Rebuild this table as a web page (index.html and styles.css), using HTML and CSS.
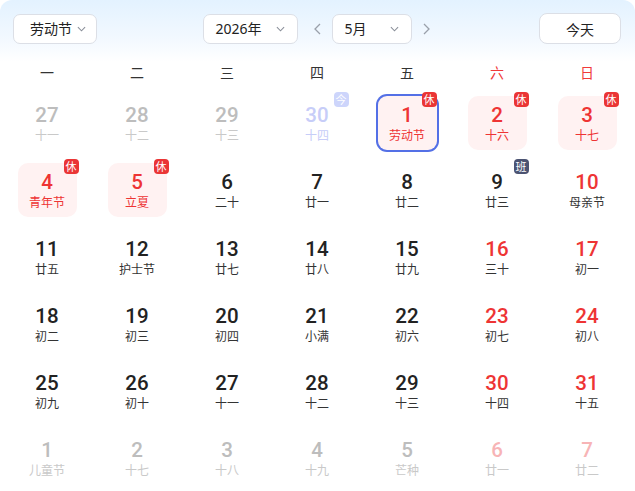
FILE: index.html
```html
<!DOCTYPE html>
<html lang="zh">
<head>
<meta charset="utf-8">
<link rel="stylesheet" href="styles.css">
</head>
<body>
<div class="cal">
  <header class="top">
    <div class="pick pick-hol"><span>劳动节</span><svg class="chev" viewBox="0 0 10 6"><path d="M1 1l4 4 4-4"/></svg></div>
    <div class="center">
      <div class="pick pick-year"><span>2026年</span><svg class="chev" viewBox="0 0 10 6"><path d="M1 1l4 4 4-4"/></svg></div>
      <svg class="arrow arrow-prev" viewBox="0 0 7 12"><path d="M6 1L1 6l5 5"/></svg>
      <div class="pick pick-month"><span>5月</span><svg class="chev" viewBox="0 0 10 6"><path d="M1 1l4 4 4-4"/></svg></div>
      <svg class="arrow arrow-next" viewBox="0 0 7 12"><path d="M1 1l5 5-5 5"/></svg>
    </div>
    <button class="today-btn">今天</button>
  </header>

  <div class="weekdays">
    <div>一</div><div>二</div><div>三</div><div>四</div><div>五</div><div class="red">六</div><div class="red">日</div>
  </div>

  <div class="grid">
    <div class="cell"><div class="box other"><span class="num">27</span><span class="lunar">十一</span></div></div>
    <div class="cell"><div class="box other"><span class="num">28</span><span class="lunar">十二</span></div></div>
    <div class="cell"><div class="box other"><span class="num">29</span><span class="lunar">十三</span></div></div>
    <div class="cell"><div class="box today"><span class="num">30</span><span class="lunar">十四</span><i class="badge badge-today">今</i></div></div>
    <div class="cell"><div class="box hol sel"><span class="num">1</span><span class="lunar">劳动节</span><i class="badge">休</i></div></div>
    <div class="cell"><div class="box hol"><span class="num">2</span><span class="lunar">十六</span><i class="badge">休</i></div></div>
    <div class="cell"><div class="box hol"><span class="num">3</span><span class="lunar">十七</span><i class="badge">休</i></div></div>

    <div class="cell"><div class="box hol"><span class="num">4</span><span class="lunar">青年节</span><i class="badge">休</i></div></div>
    <div class="cell"><div class="box hol"><span class="num">5</span><span class="lunar">立夏</span><i class="badge">休</i></div></div>
    <div class="cell"><div class="box"><span class="num">6</span><span class="lunar">二十</span></div></div>
    <div class="cell"><div class="box"><span class="num">7</span><span class="lunar">廿一</span></div></div>
    <div class="cell"><div class="box"><span class="num">8</span><span class="lunar">廿二</span></div></div>
    <div class="cell"><div class="box"><span class="num">9</span><span class="lunar">廿三</span><i class="badge badge-work">班</i></div></div>
    <div class="cell"><div class="box we"><span class="num">10</span><span class="lunar">母亲节</span></div></div>

    <div class="cell"><div class="box"><span class="num">11</span><span class="lunar">廿五</span></div></div>
    <div class="cell"><div class="box"><span class="num">12</span><span class="lunar">护士节</span></div></div>
    <div class="cell"><div class="box"><span class="num">13</span><span class="lunar">廿七</span></div></div>
    <div class="cell"><div class="box"><span class="num">14</span><span class="lunar">廿八</span></div></div>
    <div class="cell"><div class="box"><span class="num">15</span><span class="lunar">廿九</span></div></div>
    <div class="cell"><div class="box we"><span class="num">16</span><span class="lunar">三十</span></div></div>
    <div class="cell"><div class="box we"><span class="num">17</span><span class="lunar">初一</span></div></div>

    <div class="cell"><div class="box"><span class="num">18</span><span class="lunar">初二</span></div></div>
    <div class="cell"><div class="box"><span class="num">19</span><span class="lunar">初三</span></div></div>
    <div class="cell"><div class="box"><span class="num">20</span><span class="lunar">初四</span></div></div>
    <div class="cell"><div class="box"><span class="num">21</span><span class="lunar">小满</span></div></div>
    <div class="cell"><div class="box"><span class="num">22</span><span class="lunar">初六</span></div></div>
    <div class="cell"><div class="box we"><span class="num">23</span><span class="lunar">初七</span></div></div>
    <div class="cell"><div class="box we"><span class="num">24</span><span class="lunar">初八</span></div></div>

    <div class="cell"><div class="box"><span class="num">25</span><span class="lunar">初九</span></div></div>
    <div class="cell"><div class="box"><span class="num">26</span><span class="lunar">初十</span></div></div>
    <div class="cell"><div class="box"><span class="num">27</span><span class="lunar">十一</span></div></div>
    <div class="cell"><div class="box"><span class="num">28</span><span class="lunar">十二</span></div></div>
    <div class="cell"><div class="box"><span class="num">29</span><span class="lunar">十三</span></div></div>
    <div class="cell"><div class="box we"><span class="num">30</span><span class="lunar">十四</span></div></div>
    <div class="cell"><div class="box we"><span class="num">31</span><span class="lunar">十五</span></div></div>

    <div class="cell"><div class="box other"><span class="num">1</span><span class="lunar">儿童节</span></div></div>
    <div class="cell"><div class="box other"><span class="num">2</span><span class="lunar">十七</span></div></div>
    <div class="cell"><div class="box other"><span class="num">3</span><span class="lunar">十八</span></div></div>
    <div class="cell"><div class="box other"><span class="num">4</span><span class="lunar">十九</span></div></div>
    <div class="cell"><div class="box other"><span class="num">5</span><span class="lunar">芒种</span></div></div>
    <div class="cell"><div class="box other other-we"><span class="num">6</span><span class="lunar">廿一</span></div></div>
    <div class="cell"><div class="box other other-we"><span class="num">7</span><span class="lunar">廿二</span></div></div>
  </div>
</div>
</body>
</html>
```

FILE: styles.css
```css
* { box-sizing: border-box; }
html, body {
  margin: 0;
  padding: 0;
  background: #fff;
  overflow: hidden;
}
body {
  font-family: "Noto Sans", "Noto Sans CJK SC", sans-serif;
  color: #222;
}
.cal {
  width: 635px;
  height: 491px;
  border-radius: 12px 12px 0 0;
  background: linear-gradient(to bottom, #e3f2ff 0px, #f3f9ff 40px, #ffffff 62px);
  overflow: hidden;
}
.top {
  height: 58px;
  padding: 0 14px 0 13px;
  display: flex;
  align-items: center;
  justify-content: space-between;
}
.center {
  display: flex;
  align-items: center;
  margin-left: -4px;
}
.pick {
  height: 30px;
  background: #fff;
  border: 1px solid #dcdfe6;
  border-radius: 7px;
  display: flex;
  align-items: center;
  justify-content: space-between;
  font-size: 14px;
  color: #222;
  font-family: "Noto Sans", "Noto Sans CJK SC", sans-serif;
}
.pick span { line-height: 1; }
.pick-hol { width: 84px; padding: 0 10px 0 16px; }
.pick-year { width: 95px; padding: 0 12px 0 12px; }
.pick-month { width: 80px; padding: 0 12px 0 12px; }
.chev {
  width: 9px;
  height: 6px;
  fill: none;
  stroke: #8a8f99;
  stroke-width: 1.2;
}
.arrow {
  width: 7px;
  height: 12px;
  fill: none;
  stroke: #9aa0aa;
  stroke-width: 1.3;
}
.arrow-prev { margin: 0 11px 0 16px; }
.arrow-next { margin: 0 0 0 11px; }
.today-btn {
  width: 82px;
  height: 31px;
  margin-top: -1px;
  background: #fff;
  border: 1px solid #dcdfe6;
  border-radius: 8px;
  font-size: 14px;
  color: #222;
  font-family: "Noto Sans CJK SC", sans-serif;
  padding: 0;
}
.weekdays, .grid {
  display: grid;
  grid-template-columns: repeat(7, 90px);
  padding: 0 3px 0 2px;
}
.weekdays {
  height: 28px;
  align-items: center;
  text-align: center;
  font-size: 14px;
  color: #333;
  font-family: "Noto Sans CJK SC", sans-serif;
}
.weekdays .red { color: #f03a3a; }
.grid {
  padding-top: 6px;
  grid-auto-rows: 67px;
}
.cell {
  padding-top: 4px;
}
.box {
  position: relative;
  width: 59px;
  height: 54px;
  margin: 0 auto;
  padding-top: 8px;
  border-radius: 10px;
  display: flex;
  flex-direction: column;
  align-items: center;
  justify-content: flex-start;
}
.num {
  font-family: Roboto, "Noto Sans", sans-serif;
  font-size: 20.5px;
  line-height: 22px;
  font-weight: 500;
  color: #222;
}
.lunar {
  margin-top: 1px;
  font-size: 12px;
  line-height: 15px;
  color: #333;
  font-family: "Noto Sans CJK SC", sans-serif;
}
.we .num { color: #ee3434; }
.hol { background: #fff2f2; }
.hol .num, .hol .lunar { color: #ee3434; }
.sel {
  box-shadow: 0 0 0 2px #5470e6;
  border-radius: 9px;
}
.other .num { color: #bdbdbd; }
.other .lunar { color: #c9c9c9; }
.other-we .num { color: #f7b4b6; }
.today .num { color: #c7cdf8; }
.today .lunar { color: #c7cdf8; }
.badge {
  position: absolute;
  top: -4px;
  right: -2px;
  width: 15px;
  height: 15px;
  border-radius: 4px;
  background: #ea3535;
  color: #fff;
  font-style: normal;
  font-size: 11px;
  line-height: 15px;
  text-align: center;
  font-family: "Noto Sans CJK SC", sans-serif;
}
.sel .badge { right: 0; top: -4px; }
.badge-today { background: #cdd5fb; }
.badge-work { background: #4b5372; }
```
